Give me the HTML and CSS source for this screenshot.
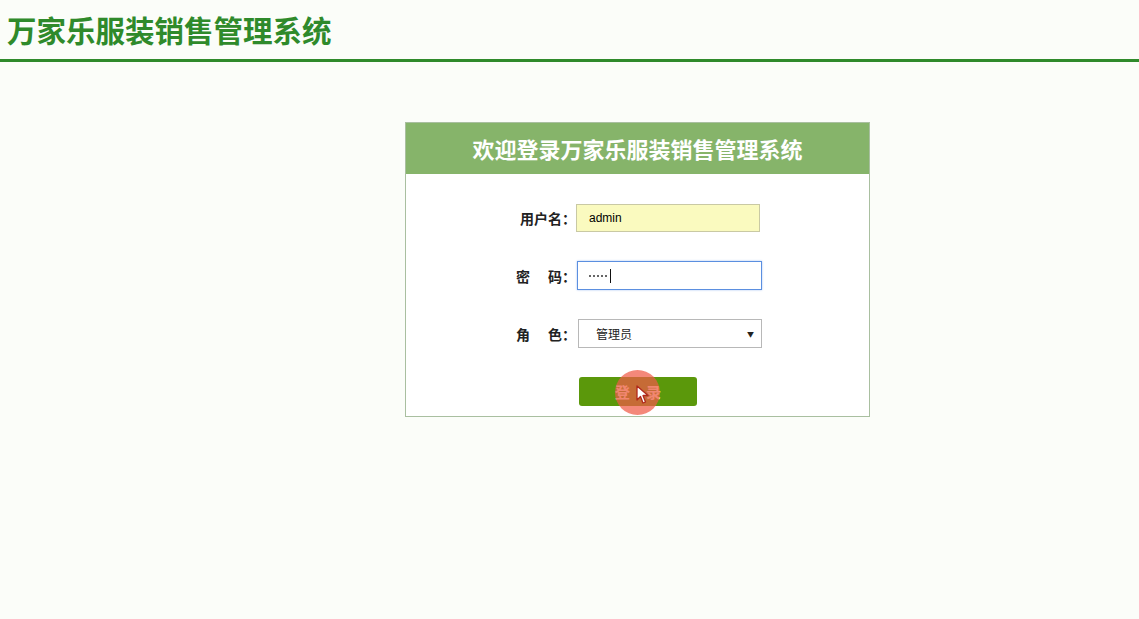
FILE: index.html
```html
<!DOCTYPE html>
<html lang="zh-CN">

<head>
    <meta charset="UTF-8">
    <meta name="viewport" content="width=device-width, initial-scale=1.0">
    <title>万家乐服装销售管理系统</title>
    <link rel="stylesheet" href="styles.css">
</head>

<body>

    <div class="top">
        <h1>万家乐服装销售管理系统</h1>
    </div>

    <div class="login-box">
        <div class="login-title">欢迎登录万家乐服装销售管理系统</div>
        <form class="login-form">
            <div class="form-row">
                <label>用户名<span class="colon">：</span></label>
                <input type="text" class="user" value="admin">
            </div>
            <div class="form-row">
                <label>密<span class="gap"></span>码<span class="colon">：</span></label>
                <div class="pwd">
                    <span class="dot"></span><span class="dot"></span><span class="dot"></span><span class="dot"></span><span class="dot"></span><span class="caret"></span>
                </div>
            </div>
            <div class="form-row">
                <label>角<span class="gap"></span>色<span class="colon">：</span></label>
                <div class="select">
                    <span>管理员</span>
                    <span class="arrow">▼</span>
                </div>
            </div>
            <div class="btn-row">
                <button type="button" class="btn">登<span class="btn-gap"></span>录</button>
                <div class="click-mark">
                    <svg width="14" height="20" viewBox="0 0 14 20">
                        <path d="M1 1 L1 15 L4.5 11.5 L7 18 L9.5 17 L7 10.5 L12 10.5 Z" fill="#fff" stroke="#b0281c" stroke-width="1.3" stroke-linejoin="round"/>
                    </svg>
                </div>
            </div>
        </form>
    </div>

</body>

</html>
```

FILE: styles.css
```css
* {
    padding: 0;
    margin: 0;
    box-sizing: border-box;
}

body {
    background-color: #fbfdf9;
    font-family: "Microsoft YaHei", "Noto Sans CJK SC", "Liberation Sans", sans-serif;
    height: 100vh;
}

.top {
    height: 62px;
    border-bottom: 3px solid #2f8a2b;
    padding-left: 7px;
    padding-top: 9px;
}

.top h1 {
    font-size: 29.5px;
    line-height: 40px;
    color: #2f8a2b;
    font-weight: bold;
}

.login-box {
    width: 465px;
    margin: 60px 0 0 405px;
    border: 1px solid #a9bfa0;
    background-color: #fff;
}

.login-title {
    height: 51px;
    line-height: 51px;
    background-color: #86b46a;
    color: #fff;
    font-size: 22px;
    font-weight: bold;
    text-align: center;
}

.login-form {
    padding-top: 29px;
    padding-bottom: 10px;
}

.form-row {
    display: flex;
    align-items: center;
    height: 29px;
    margin-bottom: 29px;
    padding-left: 107px;
}

.form-row label {
    display: flex;
    align-items: center;
    justify-content: flex-end;
    font-size: 14px;
    font-weight: bold;
    color: #222;
    width: 63px;
}

.form-row .colon {
    display: inline-block;
    width: 14px;
    text-align: center;
}

.form-row .gap {
    display: inline-block;
    width: 18px;
}

input {
    width: 184px;
    height: 28px;
    font-size: 12px;
    padding-left: 12px;
    font-family: "Liberation Sans", sans-serif;
    outline: none;
}

.user {
    background-color: #fafabf;
    border: 1px solid #c9c9a4;
}

.pwd {
    width: 185px;
    height: 29px;
    background-color: #fff;
    border: 1px solid #5b8fe0;
    box-shadow: 0 0 2px #a8c4f2;
    margin-left: 1px;
    padding-left: 11px;
    display: flex;
    align-items: center;
    gap: 2px;
}

.pwd .dot {
    width: 2px;
    height: 2px;
    border-radius: 50%;
    background-color: #333;
}

.pwd .caret {
    width: 1px;
    height: 14px;
    background-color: #111;
    margin-left: 1px;
}

.select {
    width: 184px;
    height: 29px;
    border: 1px solid #b8b8b8;
    background-color: #fff;
    margin-left: 2px;
    display: flex;
    align-items: center;
    justify-content: space-between;
    padding: 0 7px 0 17px;
    font-size: 12px;
    color: #222;
}

.select .arrow {
    font-size: 7px;
    color: #222;
}

.btn-row {
    position: relative;
    padding-left: 173px;
}

.btn {
    width: 118px;
    height: 29px;
    background-color: #5b980b;
    color: #f4f6dc;
    border: none;
    border-radius: 3px;
    font-size: 15px;
    font-weight: bold;
    font-family: "Microsoft YaHei", "Noto Sans CJK SC", sans-serif;
}

.btn-gap {
    display: inline-block;
    width: 16px;
}

.click-mark {
    position: absolute;
    left: 209px;
    top: -7px;
    width: 45px;
    height: 45px;
    border-radius: 50%;
    background-color: rgba(240, 90, 70, 0.72);
}

.click-mark svg {
    position: absolute;
    left: 21px;
    top: 15px;
}
```
